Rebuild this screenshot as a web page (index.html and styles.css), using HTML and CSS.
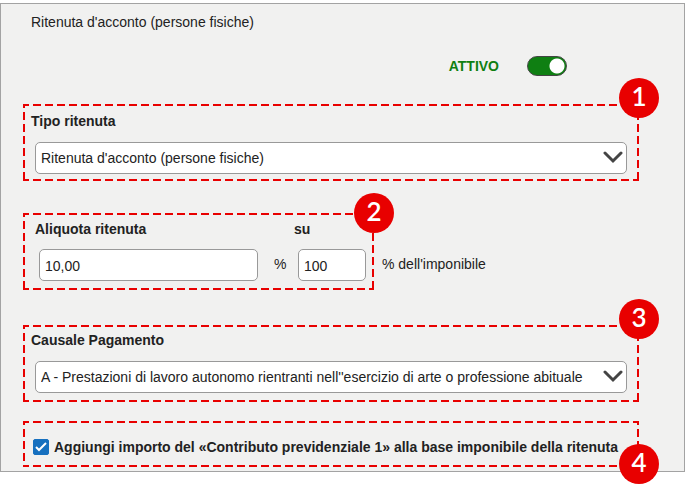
FILE: index.html
```html
<!DOCTYPE html>
<html lang="it">

<head>
    <meta charset="UTF-8">
    <meta name="viewport" content="width=device-width, initial-scale=1.0">
    <title>Ritenuta d'acconto</title>
    <link rel="stylesheet" href="styles.css">
</head>

<body>
    <form class="panel">
        <p class="title">Ritenuta d'acconto (persone fisiche)</p>

        <div class="status">
            <label for="attivo">ATTIVO</label>
            <input type="checkbox" class="switch" id="attivo" checked>
        </div>

        <div class="box box-tipo">
            <label class="name" for="tipo">Tipo ritenuta</label>
            <div class="select">
                <select id="tipo">
                    <option>Ritenuta d'acconto (persone fisiche)</option>
                </select>
                <svg class="arrow" viewBox="0 0 20 14"><path d="M2 2 L10 10 L18 2"/></svg>
            </div>
            <span class="badge badge-top">1</span>
        </div>

        <div class="line">
            <div class="box box-aliquota">
                <label class="name" for="aliquota">Aliquota ritenuta</label>
                <label class="name name-su" for="su">su</label>
                <input type="text" class="text" id="aliquota" value="10,00">
                <span class="percent">%</span>
                <input type="text" class="text" id="su" value="100">
                <span class="badge badge-middle">2</span>
            </div>
            <span class="after">% dell'imponibile</span>
        </div>

        <div class="box box-causale">
            <label class="name" for="causale">Causale Pagamento</label>
            <div class="select">
                <select id="causale">
                    <option>A - Prestazioni di lavoro autonomo rientranti nell''esercizio di arte o professione abituale</option>
                </select>
                <svg class="arrow" viewBox="0 0 20 14"><path d="M2 2 L10 10 L18 2"/></svg>
            </div>
            <span class="badge badge-top">3</span>
        </div>

        <div class="box box-aggiungi">
            <span class="tick">
                <input type="checkbox" id="aggiungi" checked>
                <svg viewBox="0 0 16 16"><path d="M3 8 L6 11 L13 4"/></svg>
            </span>
            <label for="aggiungi">Aggiungi importo del «Contributo previdenziale 1» alla base imponibile della ritenuta</label>
            <span class="badge badge-bottom">4</span>
        </div>
    </form>
</body>

</html>
```

FILE: styles.css
```css
* {
    box-sizing: border-box;
    padding: 0;
    margin: 0;
}

body {
    padding: 3px 0 15px;
    background: #fff;
    color: #222;
    font-family: "Liberation Sans", Arial, sans-serif;
    font-size: 14px;
    line-height: 20px;
}

input,
select {
    font: inherit;
    color: inherit;
}

.panel {
    padding: 8px 45px 4px 22px;
    background: #f1f1f0;
    border: 1px solid #a3a3a3;
}

.title {
    padding-left: 8px;
}

/* interruttore */

.status {
    display: flex;
    justify-content: flex-end;
    align-items: center;
    gap: 28px;
    margin: 24px 72px 28px 0;
    color: #0f7f12;
    font-weight: bold;
}

.switch {
    appearance: none;
    width: 40px;
    height: 20px;
    border: 1px solid #444;
    border-radius: 10px;
    background: radial-gradient(circle at 29px 9px, #fff 7px, #0f7f12 8px);
}

.switch:not(:checked) {
    background: radial-gradient(circle at 9px 9px, #fff 7px, #777 8px);
}

/* riquadri tratteggiati */

.box {
    position: relative;
    background:
        repeating-linear-gradient(to right, #e80000 0 6px, transparent 6px 10px, #e80000 10px 12px) top / 100% 2px no-repeat,
        repeating-linear-gradient(to right, #e80000 0 6px, transparent 6px 10px, #e80000 10px 12px) bottom / 100% 2px no-repeat,
        repeating-linear-gradient(to bottom, #e80000 0 4px, transparent 4px 8px, #e80000 8px 12px) left / 2px 100% no-repeat,
        repeating-linear-gradient(to bottom, #e80000 0 4px, transparent 4px 8px, #e80000 8px 12px) right / 2px 100% no-repeat;
}

.badge {
    position: absolute;
    right: -20px;
    width: 40px;
    height: 40px;
    border-radius: 50%;
    background: #e80000;
    color: #fff;
    font-family: Lato, sans-serif;
    font-size: 26px;
    font-weight: 600;
    line-height: 36px;
    text-align: center;
}

.badge-top {
    top: -26px;
}

.badge-middle {
    top: -20px;
}

.badge-bottom {
    bottom: -17px;
}

.name {
    display: block;
    padding-left: 8px;
    font-weight: bold;
}

.box-tipo {
    padding: 7px 12px 7px 0;
}

.box-causale {
    padding: 5px 12px 9px 0;
}

/* tendine e campi */

.select {
    position: relative;
    margin: 11px 0 0 12px;
}

select,
.text {
    display: block;
    width: 100%;
    height: 32px;
    border: 1px solid #999;
    border-radius: 5px;
    background: #fff;
    padding: 0 5px;
}

select {
    appearance: none;
    padding-right: 30px;
}

.arrow {
    position: absolute;
    top: 9px;
    right: 4px;
    width: 20px;
    height: 14px;
    pointer-events: none;
}

.arrow path {
    fill: none;
    stroke: #444;
    stroke-width: 3;
    stroke-linecap: round;
}

.line {
    display: flex;
    margin: 32px 0 35px;
}

.box-aliquota {
    flex: 0 1 351px;
    display: grid;
    grid-template-columns: 1fr 40px 68px;
    row-gap: 10px;
    padding: 6px 8px 9px 16px;
}

.box-aliquota .name {
    grid-column: 1 / 3;
    margin-left: -4px;
    padding: 0;
}

.box-aliquota .name-su {
    grid-column: 3;
}

.percent {
    padding: 5px 0 0 16px;
}

.box-aliquota .text {
    padding-top: 2px;
}

.after {
    padding: 41px 0 0 8px;
}

/* casella di spunta */

.box-aggiungi {
    display: flex;
    align-items: center;
    gap: 5px;
    margin: 19px 0 0;
    padding: 16px 0 10px 10px;
    font-weight: bold;
    white-space: nowrap;
}

.tick {
    position: relative;
    width: 16px;
    height: 16px;
}

.tick input {
    appearance: none;
    display: block;
    width: 16px;
    height: 16px;
    border: 1px solid #1670bf;
    border-radius: 2px;
    background: #fff;
}

.tick input:checked {
    background: #1670bf;
}

.tick svg {
    position: absolute;
    top: 0;
    left: 0;
    pointer-events: none;
}

.tick path {
    fill: none;
    stroke: #fff;
    stroke-width: 2;
}
```
